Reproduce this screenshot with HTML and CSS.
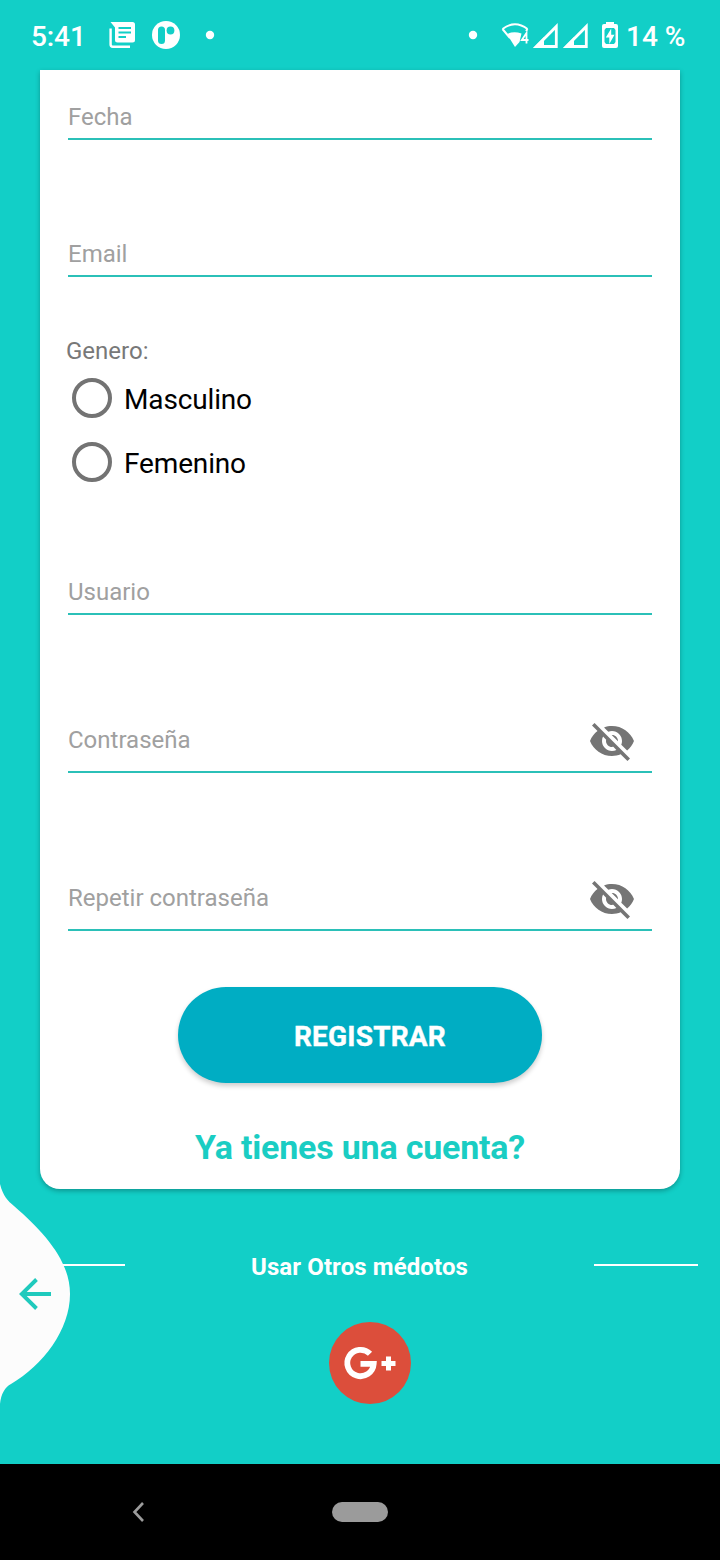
FILE: index.html
```html
<!DOCTYPE html>
<html lang="es">
<head>
<meta charset="utf-8">
<title>Registro</title>
<link rel="stylesheet" href="styles.css">
</head>
<body>
<div class="screen">
  <header class="status">
    <span class="clock">5:41</span>
    <svg class="status-left" width="120" height="40" viewBox="100 15 120 40">
      <path fill="#fff" d="M110.500 22H132.500Q135 22 135 24.500V40Q135 42.500 132.500 42.500H117.500Q115 42.500 115 40V27.500Z"/>
      <path class="teal-line" d="M118.500 28H131M118.500 32.500H131M118.500 37H126"/>
      <path class="white-line" d="M110.600 28.500V44.500Q110.600 46.700 112.800 46.700H130"/>
      <circle cx="166" cy="35" r="14" fill="#fff"/>
      <rect x="158" y="26.500" width="7" height="17.500" rx="3.500" fill="#12cfc7"/>
      <circle cx="170.500" cy="30.500" r="3.900" fill="#12cfc7"/>
      <circle cx="210" cy="35" r="4.200" fill="#fff"/>
    </svg>
    <svg class="status-right" width="160" height="40" viewBox="465 15 160 40">
      <circle cx="473" cy="35" r="4.200" fill="#fff"/>
      <path class="white-line thin" d="M502.500 29Q515 19.500 527.500 29M502.500 29L510 38M527.500 29L526 31"/>
      <path fill="#fff" d="M507 34Q513.500 31 521.500 33.500L519.500 42L515 47Z"/>
      <path class="white-line four" d="M526.500 43.500V33L521.800 40H528.500"/>
      <path class="white-line signal" d="M536.500 46.500L556.300 26.500V46.500Z"/>
      <path fill="#fff" d="M533 48L544 37V48Z"/>
      <path class="white-line signal" d="M566.500 46.500L586.300 26.500V46.500Z"/>
      <path fill="#fff" d="M563 48L574 37V48Z"/>
      <path fill="#fff" d="M606 22H614V24H616Q618 24 618 26V46Q618 48 616 48H604Q602 48 602 46V26Q602 24 604 24H606Z"/>
      <path fill="#12cfc7" d="M606 28H614L615.500 30V42L614 44H606L604.500 42V30Z"/>
      <path fill="#fff" d="M611.200 28.500L605.800 37.500H609.300V44L614.500 34.800H611.200Z"/>
    </svg>
    <span class="battery">14 %</span>
  </header>

  <main class="card">
    <div class="field field-date">Fecha</div>
    <div class="field field-email">Email</div>
    <div class="gender">Genero:</div>
    <label class="option"><span class="radio"></span><span class="option-text">Masculino</span></label>
    <label class="option"><span class="radio"></span><span class="option-text">Femenino</span></label>
    <div class="field field-user">Usuario</div>
    <div class="field field-pass"><span>Contraseña</span>
      <svg class="eye" width="48" height="48" viewBox="0 0 24 24"><path d="M12 7c2.760 0 5 2.240 5 5 0 .65-.13 1.260-.36 1.830l2.920 2.920c1.510-1.260 2.700-2.890 3.430-4.750-1.730-4.390-6-7.500-11-7.500-1.400 0-2.740.25-3.980.7l2.160 2.160C10.740 7.130 11.350 7 12 7zM2 4.270l2.280 2.280.46.46C3.080 8.300 1.780 10.020 1 12c1.730 4.390 6 7.500 11 7.500 1.550 0 3.030-.3 4.380-.84l.42.42L19.730 22 21 20.730 3.270 3 2 4.270zM7.530 9.800l1.550 1.550c-.05.21-.08.43-.08.65 0 1.660 1.340 3 3 3 .22 0 .44-.03.65-.08l1.550 1.550c-.67.33-1.410.53-2.200.53-2.760 0-5-2.240-5-5 0-.79.2-1.530.53-2.200zm4.310-.78l3.150 3.150.02-.16c0-1.660-1.340-3-3-3l-.17.01z"/></svg>
    </div>
    <div class="field field-pass"><span>Repetir contraseña</span>
      <svg class="eye" width="48" height="48" viewBox="0 0 24 24"><path d="M12 7c2.760 0 5 2.240 5 5 0 .65-.13 1.260-.36 1.830l2.920 2.920c1.510-1.260 2.700-2.890 3.430-4.750-1.730-4.390-6-7.500-11-7.500-1.400 0-2.740.25-3.980.7l2.160 2.160C10.740 7.130 11.350 7 12 7zM2 4.270l2.280 2.280.46.46C3.080 8.300 1.780 10.020 1 12c1.730 4.390 6 7.500 11 7.500 1.550 0 3.030-.3 4.380-.84l.42.42L19.730 22 21 20.730 3.270 3 2 4.270zM7.530 9.800l1.550 1.550c-.05.21-.08.43-.08.65 0 1.660 1.340 3 3 3 .22 0 .44-.03.65-.08l1.550 1.550c-.67.33-1.410.53-2.200.53-2.760 0-5-2.240-5-5 0-.79.2-1.530.53-2.200zm4.310-.78l3.150 3.150.02-.16c0-1.660-1.340-3-3-3l-.17.01z"/></svg>
    </div>
    <button class="submit">REGISTRAR</button>
    <a class="login">Ya tienes una cuenta?</a>
  </main>

  <div class="divider"><i class="rule"></i><span class="others">Usar Otros médotos</span><i class="rule"></i></div>

  <svg class="google" width="82" height="82" viewBox="0 0 82 82">
    <circle cx="41" cy="41" r="41" fill="#dc4e3b"/>
    <path fill="none" stroke="#fff" stroke-width="5.800" d="M41 31.800A13.200 13.200 0 1 0 44.700 41.900H31.500"/>
    <path fill="none" stroke="#fff" stroke-width="5" d="M52.500 41.500H66.500M59.500 34.500V48.500"/>
  </svg>

  <!-- Back gesture handle over the left edge -->
  <svg class="gesture" width="72" height="230" viewBox="0 1180 72 230">
    <path fill="#fcfcfc" d="M0 1184C3 1196 8 1201 14 1206C45 1233 70 1261 70 1294C70 1330 43 1365 11 1384C5 1387 1 1394 0 1404Z"/>
    <path fill="none" stroke="#1fcabd" stroke-width="3.900" d="M51 1294H22M36.500 1279.500L21.800 1294L36.500 1308.500"/>
  </svg>

  <nav class="navbar">
    <svg class="nav-back" width="14" height="22" viewBox="0 0 14 22"><path d="M12 2L3.500 11L12 20"/></svg>
    <span class="home"></span>
  </nav>
</div>
</body>
</html>
```
FILE: styles.css
```css
* { box-sizing: border-box; }
body { margin: 0; font-family: Roboto, sans-serif; }
.screen {
  position: relative;
  width: 720px;
  height: 1560px;
  background: #12cfc7;
  display: flex;
  flex-direction: column;
  overflow: hidden;
}
.status {
  flex: none;
  height: 70px;
  padding: 15px 35px 15px 31px;
  display: flex;
  align-items: center;
  color: #fff;
  font-size: 28px;
  font-weight: 500;
  white-space: nowrap;
}
.clock { width: 69px; line-height: 40px; padding-top: 3px; letter-spacing: -0.1px; }
.status-left { flex: none; }
.status-right { flex: none; margin-left: auto; }
.battery { width: 60px; line-height: 40px; padding: 3px 0 0 1px; letter-spacing: 0; }
.teal-line { stroke: #12cfc7; stroke-width: 2; fill: none; }
.white-line { stroke: #fff; stroke-width: 2.4; fill: none; }
.thin { stroke-width: 2; }
.four { stroke-width: 1.8; }
.signal { stroke-width: 2.8; }
.card {
  flex: none;
  width: 640px;
  height: 1119px;
  margin: 0 40px;
  padding: 24px 28px 0;
  background: #fff;
  border-radius: 0 0 20px 20px;
  box-shadow: 0 2px 5px rgba(0, 0, 0, 0.28);
  display: flex;
  flex-direction: column;
}
.field {
  flex: none;
  height: 46px;
  border-bottom: 2px solid #2bc0b8;
  color: #a0a0a0;
  font-size: 24px;
  line-height: 46px;
}
.field-email { margin-top: 91px; }
.gender {
  margin: 60px 0 0 -2px;
  height: 28px;
  line-height: 28px;
  font-size: 24px;
  color: #787878;
}
.option {
  height: 64px;
  padding-left: 4px;
  display: flex;
  align-items: center;
  gap: 12px;
  font-size: 28px;
  color: #000;
}
.option-text { padding-top: 2px; letter-spacing: -0.15px; }
.gender + .option { margin-top: 1px; }
.radio {
  width: 40px;
  height: 40px;
  border: 4px solid #737373;
  border-radius: 50%;
}
.field-user { margin-top: 75px; }
.field-pass {
  height: 68px;
  margin-top: 90px;
  display: flex;
  justify-content: space-between;
  line-height: 70px;
}
.eye { margin: 12px 16px 0 0; fill: #757575; }
.submit {
  flex: none;
  align-self: center;
  width: 364px;
  height: 96px;
  margin-top: 56px;
  padding: 2px 0 0 20px;
  border: 0;
  border-radius: 48px;
  background: #00adc3;
  box-shadow: 0 3px 5px rgba(0, 0, 0, 0.2);
  color: #fff;
  font: bold 28px Roboto, sans-serif;
  letter-spacing: 0.2px;
  -webkit-text-stroke: 0.4px #fff;
}
.login {
  align-self: center;
  margin-top: 44px;
  line-height: 40px;
  font-size: 34px;
  font-weight: bold;
  letter-spacing: -0.2px;
  color: #1acdc3;
  white-space: nowrap;
}
.divider {
  flex: none;
  height: 40px;
  margin: 56px 22px 0 21px;
  display: flex;
  align-items: center;
  justify-content: space-between;
  color: #fff;
}
.others { font-size: 24px; font-weight: bold; padding-top: 3px; letter-spacing: 0.1px; }
.rule { width: 104px; height: 2px; background: #fff; }
.google { flex: none; margin: 37px 0 0 329px; }
.gesture { position: absolute; left: 0; top: 1180px; }
.navbar {
  flex: none;
  height: 96px;
  margin-top: auto;
  padding-left: 131px;
  background: #000;
  display: flex;
  align-items: center;
}
.nav-back { fill: none; stroke: #9c9c9c; stroke-width: 2.6; }
.home {
  width: 56px;
  height: 20px;
  margin-left: 187px;
  border-radius: 10px;
  background: #9b9b9b;
}
```
